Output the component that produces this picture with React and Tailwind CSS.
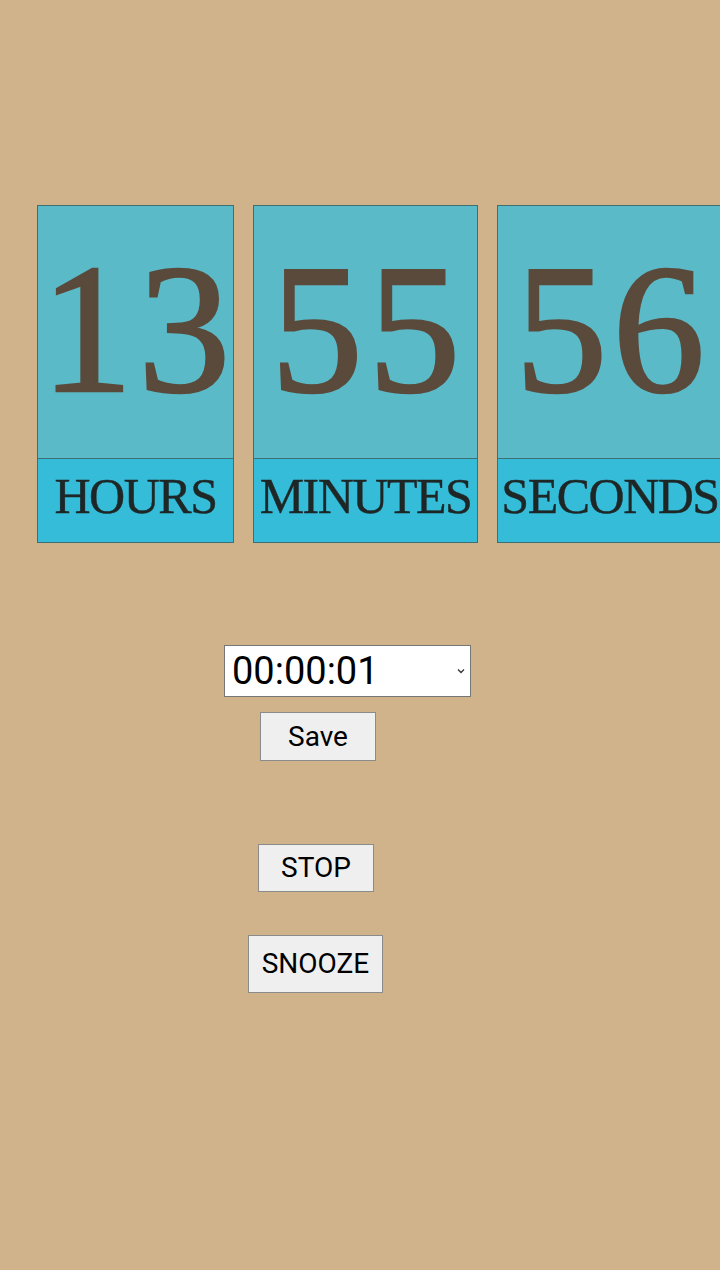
import React from 'react';

const serif = { fontFamily: '"Liberation Serif", "DejaVu Serif", serif' };
const sans = { fontFamily: 'Roboto, "Liberation Sans", sans-serif' };

function Unit({ value, label, width }) {
  return (
    <div className={`shrink-0 flex flex-col border border-[#3f6f74] ${width}`}>
      <div
        className="h-[252px] bg-[#5bbac8] flex items-center justify-center text-[#5a4a3b] text-[185px] leading-none tracking-[5px] pl-[5px] pb-[8px] [-webkit-text-stroke:2.5px_#5a4a3b]"
        style={serif}
      >
        {value}
      </div>
      <div
        className="h-[84px] bg-[#35bcd9] border-t border-[#3f6f74] flex items-center justify-center text-[#1e2626] text-[50px] leading-none whitespace-nowrap pb-[10px] tracking-[-1.5px] [-webkit-text-stroke:0.4px_#1e2626]"
        style={serif}
      >
        {label}
      </div>
    </div>
  );
}

export default function App() {
  return (
    <div className="w-[720px] h-[1270px] bg-[#d0b38b] overflow-hidden" style={sans}>
      <div className="flex gap-[19px] pl-[37px] pt-[205px]">
        <Unit value="13" label="HOURS" width="w-[197px]" />
        <Unit value="55" label="MINUTES" width="w-[225px]" />
        <Unit value="56" label="SECONDS" width="w-[226px]" />
      </div>

      <div className="flex flex-col items-start">
        <div className="relative ml-[224px] mt-[102px] w-[247px] h-[52px] bg-white border border-[#767676]">
          <div className="pl-[7px] h-full flex items-center text-[38px] leading-none text-black">00:00:01</div>
          <svg className="absolute right-[5px] top-[22px]" width="8" height="6" viewBox="0 0 8 6">
            <path d="M1 1.5 L4 4.5 L7 1.5" fill="none" stroke="#333" strokeWidth="1.3" />
          </svg>
        </div>

        <button className="ml-[260px] mt-[15px] w-[116px] h-[49px] bg-[#efefef] border border-[#8b8b8b] text-[28px] leading-none text-black">
          Save
        </button>

        <button className="ml-[258px] mt-[83px] w-[116px] h-[48px] bg-[#efefef] border border-[#8b8b8b] text-[28px] leading-none text-black">
          STOP
        </button>

        <button className="ml-[248px] mt-[43px] w-[135px] h-[58px] bg-[#efefef] border border-[#8b8b8b] text-[28px] leading-none text-black">
          SNOOZE
        </button>
      </div>
    </div>
  );
}
